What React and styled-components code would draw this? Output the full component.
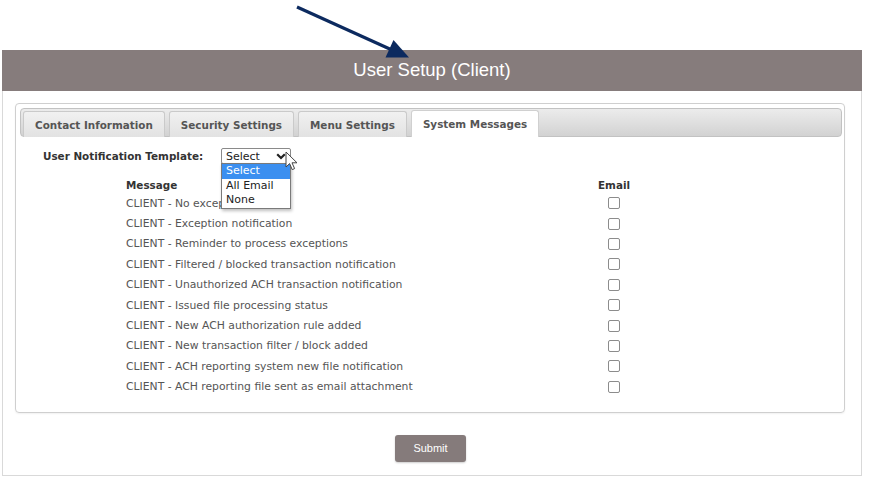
import styled, { createGlobalStyle } from "styled-components";

const GlobalStyle = createGlobalStyle`
  body {
    margin: 0;
    background: #ffffff;
    font-family: "DejaVu Sans", Verdana, sans-serif;
  }
`;

const tabs = ["Contact Information", "Security Settings", "Menu Settings", "System Messages"];

const messages = [
  "CLIENT - No exceptions",
  "CLIENT - Exception notification",
  "CLIENT - Reminder to process exceptions",
  "CLIENT - Filtered / blocked transaction notification",
  "CLIENT - Unauthorized ACH transaction notification",
  "CLIENT - Issued file processing status",
  "CLIENT - New ACH authorization rule added",
  "CLIENT - New transaction filter / block added",
  "CLIENT - ACH reporting system new file notification",
  "CLIENT - ACH reporting file sent as email attachment",
];

const options = ["Select", "All Email", "None"];

export default function App() {
  return (
    <>
      <GlobalStyle />
      <Page>
        <Arrow width="886" height="70" viewBox="0 0 886 70">
          <line x1="297" y1="7" x2="392" y2="50" stroke="#0c2a5f" strokeWidth="3.2" />
          <polygon points="393.5,40 385.5,57.5 409,57.5" fill="#0c2a5f" />
        </Arrow>
        <Panel>
          <PanelHeader>User Setup (Client)</PanelHeader>
          <PanelBody>
            <Card>
              <TabBar>
                {tabs.map((t, i) => (
                  <Tab key={t} $active={i === 3}>{t}</Tab>
                ))}
              </TabBar>
              <Content>
                <TemplateRow>
                  <Label>User Notification Template:</Label>
                  <SelectWrap>
                    <SelectBox>
                      Select
                      <Chevron width="10" height="7" viewBox="0 0 10 7">
                        <path d="M1.2 1.2 L5 5 L8.8 1.2" fill="none" stroke="#222" strokeWidth="2.2" />
                      </Chevron>
                    </SelectBox>
                    <DropList>
                      {options.map((o, i) => (
                        <Option key={o} $selected={i === 0}>{o}</Option>
                      ))}
                    </DropList>
                    <Cursor width="13" height="20" viewBox="0 0 13 20">
                      <path d="M1 1 L1 16 L4.6 12.6 L7.2 18.6 L9.6 17.6 L7 11.8 L12 11.8 Z" fill="#fff" stroke="#444" strokeWidth="1" strokeLinejoin="round" />
                    </Cursor>
                  </SelectWrap>
                </TemplateRow>
                <Table>
                  <HeadCell>Message</HeadCell>
                  <HeadCell $center>Email</HeadCell>
                  {messages.map((m) => (
                    <Row key={m}>
                      <MessageCell>{m}</MessageCell>
                      <CheckCell><Check /></CheckCell>
                    </Row>
                  ))}
                </Table>
              </Content>
            </Card>
            <Footer>
              <SubmitButton>Submit</SubmitButton>
            </Footer>
          </PanelBody>
        </Panel>
      </Page>
    </>
  );
}

const Page = styled.div`
  position: relative;
  width: 886px;
  height: 486px;
  padding: 50px 0 0 2px;
  box-sizing: border-box;
`;

const Arrow = styled.svg`
  position: absolute;
  left: 0;
  top: 0;
  z-index: 5;
  pointer-events: none;
`;

const Panel = styled.div`
  width: 860px;
  border: 1px solid #d9d9d9;
  border-top: none;
  box-sizing: border-box;
  background: #fff;
`;

const PanelHeader = styled.div`
  height: 41px;
  margin: 0 -1px;
  background: #867c7c;
  color: #fff;
  font-family: "Liberation Sans", Arial, sans-serif;
  font-size: 18.5px;
  display: flex;
  align-items: center;
  justify-content: center;
  padding-bottom: 1px;
  box-sizing: border-box;
`;

const PanelBody = styled.div`
  padding: 12px 16px 13px 12px;
`;

const Card = styled.div`
  border: 1px solid #cfcfcf;
  border-radius: 4px;
  padding: 4px 2px 4px 4px;
  box-shadow: 0 1px 2px rgba(0, 0, 0, 0.06);
`;

const TabBar = styled.div`
  height: 29px;
  box-sizing: border-box;
  display: flex;
  align-items: flex-end;
  gap: 4px;
  padding: 0 2px;
  border: 1px solid #c2c2c2;
  border-radius: 4px;
  background: linear-gradient(#ececec, #d2d2d2);
`;

const Tab = styled.div`
  box-sizing: border-box;
  padding: 0 11px;
  display: flex;
  align-items: center;
  margin-bottom: -1px;
  white-space: nowrap;
  font-size: 10.4px;
  font-weight: bold;
  color: #555;
  border: 1px solid ${(p) => (p.$active ? "#d0d0d0" : "#cacaca")};
  border-bottom: none;
  border-radius: 3px 3px 0 0;
  background: ${(p) => (p.$active ? "#fff" : "linear-gradient(#f1f1f1, #e2e2e2)")};
  height: ${(p) => (p.$active ? "27px" : "26px")};
`;

const Content = styled.div`
  padding: 11px 0 11px 23px;
`;

const TemplateRow = styled.div`
  display: flex;
  align-items: center;
  gap: 14px;
  height: 16px;
`;

const Label = styled.div`
  width: 164px;
  white-space: nowrap;
  font-size: 10.4px;
  font-weight: bold;
  color: #333;
`;

const SelectWrap = styled.div`
  position: relative;
`;

const SelectBox = styled.div`
  width: 70px;
  height: 16px;
  box-sizing: border-box;
  border: 1px solid #8a8a8a;
  border-radius: 2px;
  padding: 0 4px;
  display: flex;
  align-items: center;
  justify-content: space-between;
  font-size: 11px;
  color: #222;
`;

const Chevron = styled.svg`
  display: block;
`;

const DropList = styled.div`
  position: absolute;
  left: 0;
  top: 15px;
  width: 70px;
  box-sizing: border-box;
  border: 1px solid #7a7a7a;
  background: #fff;
  box-shadow: 1px 2px 3px rgba(0, 0, 0, 0.25);
  z-index: 3;
`;

const Option = styled.div`
  height: 14.7px;
  line-height: 14.7px;
  padding: 0 4px;
  font-size: 11px;
  color: ${(p) => (p.$selected ? "#fff" : "#222")};
  background: ${(p) => (p.$selected ? "#3b8ff0" : "#fff")};
`;

const Cursor = styled.svg`
  position: absolute;
  left: 64px;
  top: 3px;
  z-index: 4;
`;

const Table = styled.div`
  display: grid;
  grid-template-columns: 448px 80px;
  margin: 13px 0 0 83px;
`;

const HeadCell = styled.div`
  height: 16px;
  display: flex;
  align-items: center;
  justify-content: ${(p) => (p.$center ? "center" : "flex-start")};
  font-size: 10.4px;
  font-weight: bold;
  color: #333;
`;

const Row = styled.div`
  display: contents;
`;

const MessageCell = styled.div`
  height: 20.4px;
  display: flex;
  align-items: center;
  white-space: nowrap;
  font-size: 10.8px;
  color: #555;
`;

const CheckCell = styled.div`
  height: 20.4px;
  display: flex;
  align-items: center;
  justify-content: center;
`;

const Check = styled.span`
  width: 12px;
  height: 12px;
  box-sizing: border-box;
  border: 1px solid #8c8c8c;
  border-radius: 2px;
  background: #fff;
`;

const Footer = styled.div`
  display: flex;
  justify-content: center;
  margin-top: 22px;
  padding-left: 1px;
`;

const SubmitButton = styled.button`
  width: 71px;
  height: 27px;
  border: none;
  border-radius: 3px;
  background: #857b7b;
  color: #fff;
  font-family: "Liberation Sans", Arial, sans-serif;
  font-size: 11px;
  box-shadow: 0 1px 2px rgba(0, 0, 0, 0.2);
`;
